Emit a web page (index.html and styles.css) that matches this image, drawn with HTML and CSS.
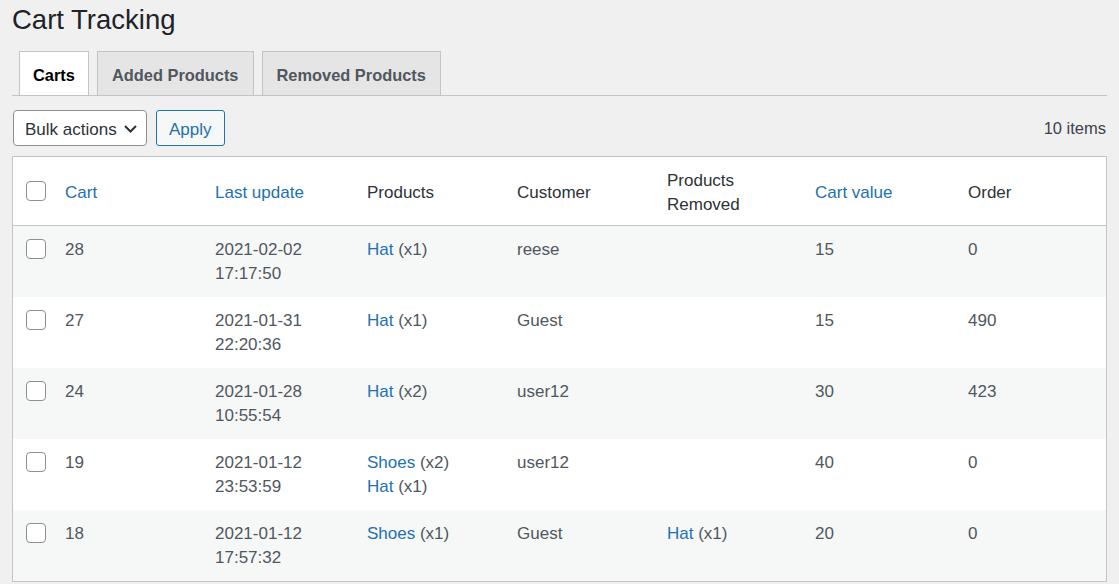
FILE: index.html
```html
<!DOCTYPE html>
<html lang="en">
<head>
<meta charset="utf-8">
<title>Cart Tracking</title>
<link rel="stylesheet" href="styles.css">
</head>
<body>
<div class="wrap">
  <h1 class="title">Cart Tracking</h1>
  <nav class="tabs">
    <a class="tab tab-active" href="#">Carts</a>
    <a class="tab" href="#">Added Products</a>
    <a class="tab" href="#">Removed Products</a>
  </nav>
  <div class="toolbar">
    <div class="select">
      <span>Bulk actions</span>
      <svg class="chev" width="13" height="8" viewBox="0 0 13 8"><path d="M1 1l5.5 5.5L12 1" fill="none" stroke="#2c3338" stroke-width="2"/></svg>
    </div>
    <button class="btn">Apply</button>
    <span class="count">10 items</span>
  </div>
  <table class="list">
    <colgroup>
      <col class="c-cb"><col class="c-cart"><col class="c-upd"><col class="c-prod"><col class="c-cust"><col class="c-rem"><col class="c-val"><col class="c-ord">
    </colgroup>
    <thead>
      <tr>
        <th class="cbcell"><input type="checkbox" class="cb"></th>
        <th><a href="#">Cart</a></th>
        <th><a href="#">Last update</a></th>
        <th>Products</th>
        <th>Customer</th>
        <th>Products<br>Removed</th>
        <th><a href="#">Cart value</a></th>
        <th>Order</th>
      </tr>
    </thead>
    <tbody>
      <tr class="alt">
        <td class="cbcell"><input type="checkbox" class="cb"></td>
        <td>28</td><td>2021-02-02<br>17:17:50</td><td><a href="#">Hat</a> (x1)</td><td>reese</td><td></td><td>15</td><td>0</td>
      </tr>
      <tr>
        <td class="cbcell"><input type="checkbox" class="cb"></td>
        <td>27</td><td>2021-01-31<br>22:20:36</td><td><a href="#">Hat</a> (x1)</td><td>Guest</td><td></td><td>15</td><td>490</td>
      </tr>
      <tr class="alt">
        <td class="cbcell"><input type="checkbox" class="cb"></td>
        <td>24</td><td>2021-01-28<br>10:55:54</td><td><a href="#">Hat</a> (x2)</td><td>user12</td><td></td><td>30</td><td>423</td>
      </tr>
      <tr>
        <td class="cbcell"><input type="checkbox" class="cb"></td>
        <td>19</td><td>2021-01-12<br>23:53:59</td><td><a href="#">Shoes</a> (x2)<br><a href="#">Hat</a> (x1)</td><td>user12</td><td></td><td>40</td><td>0</td>
      </tr>
      <tr class="alt">
        <td class="cbcell"><input type="checkbox" class="cb"></td>
        <td>18</td><td>2021-01-12<br>17:57:32</td><td><a href="#">Shoes</a> (x1)</td><td>Guest</td><td><a href="#">Hat</a> (x1)</td><td>20</td><td>0</td>
      </tr>
    </tbody>
  </table>
</div>
</body>
</html>
```

FILE: styles.css
```css
* { box-sizing: border-box; }
html, body { margin: 0; padding: 0; }
body {
  background: #f0f0f1;
  font-family: "Liberation Sans", Arial, sans-serif;
  font-size: 17px;
  color: #3c434a;
  overflow: hidden;
}
a { color: #2271b1; text-decoration: none; }
.wrap { padding: 0 12px 0 12px; }
.title {
  margin: 0;
  padding-top: 2px;
  font-size: 27.5px;
  line-height: 35px;
  font-weight: 400;
  color: #1d2327;
}
.tabs {
  display: flex;
  gap: 8px;
  margin-top: 14px;
  padding-left: 7px;
  border-bottom: 1px solid #c3c4c7;
}
.tab {
  display: block;
  height: 44px;
  line-height: 40px;
  padding: 3px 14px 0;
  border: 1px solid #c3c4c7;
  border-bottom: none;
  background: #e5e5e5;
  color: #50575e;
  font-size: 16.4px;
  font-weight: 700;
}
.tab-active { background: #fff; color: #000; padding: 3px 13px 0; }
.toolbar {
  display: flex;
  align-items: center;
  gap: 9px;
  margin-top: 14px;
  padding-left: 1px;
  height: 36px;
}
.select {
  display: flex;
  align-items: center;
  justify-content: space-between;
  width: 134px;
  height: 36px;
  padding: 3px 9px 0 11px;
  background: #fff;
  border: 1px solid #8c8f94;
  border-radius: 4px;
  color: #2c3338;
}
.chev { display: block; margin-top: -1px; }
.btn {
  height: 36px;
  padding: 3px 12px 0;
  background: #f6f7f7;
  border: 1px solid #2271b1;
  border-radius: 3px;
  color: #2271b1;
  font: inherit;
}
.count { margin-left: auto; color: #3c434a; padding: 1px 1px 0 0; font-size: 16.5px; }
.list {
  margin-top: 10px;
  width: 1095px;
  border-collapse: separate;
  border-spacing: 0;
  table-layout: fixed;
  background: #fff;
  border: 1px solid #c3c4c7;
}
.c-cb { width: 42px; }
.c-cart { width: 150px; }
.c-upd { width: 152px; }
.c-prod { width: 150px; }
.c-cust { width: 150px; }
.c-rem { width: 148px; }
.c-val { width: 153px; }
.c-ord { width: 148px; }
th, td {
  text-align: left;
  padding: 0 10px;
  line-height: 24px;
}
th {
  height: 69px;
  padding-top: 3px;
  font-weight: 400;
  color: #2c3338;
  vertical-align: middle;
  border-bottom: 1px solid #c3c4c7;
}
td {
  height: 71px;
  padding-top: 12px;
  padding-bottom: 11px;
  vertical-align: top;
  color: #50575e;
}
tr.alt td { background: #f6f7f7; }
.cbcell { padding: 0 0 0 13px; }
th.cbcell { padding-top: 0; }
td.cbcell { padding-top: 13px; }
.cb {
  appearance: none;
  -webkit-appearance: none;
  display: block;
  margin: 0;
  width: 20px;
  height: 20px;
  border: 1px solid #8c8f94;
  border-radius: 4px;
  background: #fff;
}
```
